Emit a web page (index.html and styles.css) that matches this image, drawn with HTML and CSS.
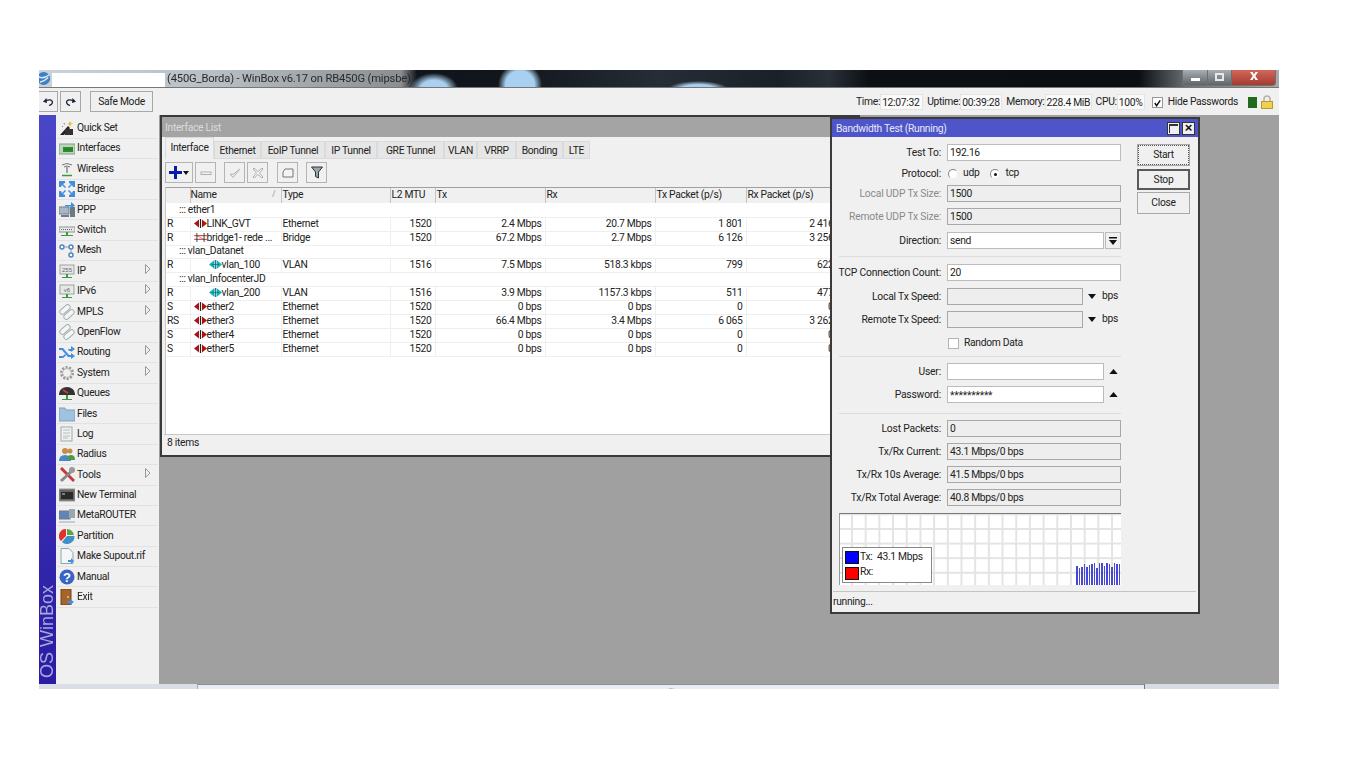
FILE: index.html
```html
<!DOCTYPE html>
<html lang="en">
<head>
<meta charset="utf-8">
<title>WinBox v6.17</title>
<link rel="stylesheet" href="styles.css">
</head>
<body>
<svg class="defs" width="0" height="0" aria-hidden="true">
  <defs>
    <symbol id="eth" viewBox="0 0 13 9"><path d="M0 4.500 5 .5v8z" fill="#a81414"/><path d="M13 4.500 8 .5v8z" fill="#a81414"/><path d="M6.500 0v9" stroke="#222" stroke-width="1.200"/></symbol>
    <symbol id="vlan" viewBox="0 0 13 9"><path d="M0 4.500 5.500 0v9z" fill="#10b0b8"/><path d="M13 4.500 7.500 0v9z" fill="#10b0b8"/><path d="M6.500 0v9" stroke="#244" stroke-width=".8"/><path d="M3 4.500h7" stroke="#0a5a60" stroke-width=".6"/></symbol>
    <symbol id="brg" viewBox="0 0 14 10"><path d="M0 3h14M0 7h14" stroke="#a02020"/><path d="M3 0v10M11 0v10" stroke="#333"/><path d="M3 3l8 4" stroke="#a02020" stroke-width=".5"/></symbol>
    <symbol id="arrow" viewBox="0 0 6 10"><path d="M.5.500 5 5 .5 9.500z" fill="#eee" stroke="#999"/></symbol>
    <symbol id="pill" viewBox="0 0 16 16"><g fill="#f4f6f6" stroke="#a3adad"><rect x="0" y="3" width="12" height="5" rx="2.500" transform="rotate(-42 6 5.500)"/><rect x="4" y="8" width="12" height="5" rx="2.500" transform="rotate(-42 10 10.500)"/></g></symbol>
    <symbol id="sortdn" viewBox="0 0 10 6"><path d="M0 0h10L5 6z" fill="#111"/></symbol>
    <symbol id="sortup" viewBox="0 0 10 6"><path d="M0 6h10L5 0z" fill="#111"/></symbol>
  </defs>
</svg>

<div class="app">
  <header class="titlebar">
    <svg class="globe" viewBox="0 0 14 16" width="13" height="15"><circle cx="5" cy="8" r="7" fill="#3f7fc4"/><path d="M-1 6q6 3 12-2M1 12q5-1 9-5" stroke="#dcebf7" stroke-width="1.500" fill="none"/></svg>
    <span class="mask"></span>
    <span class="title-text">(450G_Borda) - WinBox v6.17 on RB450G (mipsbe)</span>
    <span class="wincontrols">
      <span class="wc wc-min"><i></i></span>
      <span class="wc wc-max"><i></i></span>
      <span class="wc wc-close"><svg viewBox="0 0 10 8" width="10" height="8"><path d="M1 0h2.500L5 2.500 6.500 0H9L6.300 4 9 8H6.500L5 5.500 3.500 8H1l2.700-4z" fill="#fff"/></svg></span>
    </span>
  </header>

  <div class="toolbar">
    <button class="tbtn tbtn-undo"><svg viewBox="0 0 12 10" width="12" height="10"><path d="M4.500 1 1 4.800 5 6z" fill="#16223a"/><path d="M3.500 3.800q6-2.300 7 1.200 0 2.500-3.500 3.500" fill="none" stroke="#16223a" stroke-width="1.200"/></svg></button>
    <button class="tbtn tbtn-redo"><svg viewBox="0 0 12 10" width="12" height="10"><path d="M7.500 1 11 4.800 7 6z" fill="#16223a"/><path d="M8.500 3.800q-6-2.300-7 1.200 0 2.500 3.500 3.500" fill="none" stroke="#16223a" stroke-width="1.200"/></svg></button>
    <button class="tbtn safe">Safe Mode</button>
    <div class="stats">
      <span class="stat-l">Time:</span><span class="stat-v sv-time">12:07:32</span>
      <span class="stat-l">Uptime:</span><span class="stat-v sv-up">00:39:28</span>
      <span class="stat-l">Memory:</span><span class="stat-v sv-mem">228.4 MiB</span>
      <span class="stat-l">CPU:</span><span class="stat-v sv-cpu">100%</span>
      <label class="hide"><span class="chk"><svg viewBox="0 0 10 10" width="10" height="10"><path d="M2 5l2 3 4-6" fill="none" stroke="#111" stroke-width="1.600"/></svg></span>Hide Passwords</label>
      <span class="led"></span>
      <svg class="lock" viewBox="0 0 12 14" width="12" height="14"><path d="M3 7V4a3 3 0 0 1 6 0v3" fill="none" stroke="#b5b5a8" stroke-width="1.600"/><rect x=".5" y="6.500" width="11" height="7" fill="#f0d050" stroke="#b89a30"/></svg>
    </div>
  </div>

  <div class="main">
    <div class="brand"><span class="brand-text">OS WinBox</span></div>

    <nav class="menu">
      <a class="mi"><svg class="ic" viewBox="0 0 16 16"><path d="M1 15 9 6l2 2-6 7z" fill="#222"/><rect x="6" y="9" width="8" height="6" fill="#333"/><path d="M11 1l1 2 2 .5-2 1L11 7l-1-2.500L8 4l2-1z" fill="#e0c040"/><path d="M3 6l1 1M5 3l.5 1.500" stroke="#8a8a40"/></svg>Quick Set</a>
      <a class="mi"><svg class="ic" viewBox="0 0 16 16"><rect x="0" y="3" width="16" height="10" fill="#bcd4bc" stroke="#7ea17e"/><rect x="4" y="6" width="10" height="5" fill="#2f8a2f"/><path d="M5 8.500h8" stroke="#173" stroke-dasharray="1 1"/></svg>Interfaces</a>
      <a class="mi"><svg class="ic" viewBox="0 0 16 16"><path d="M3 4q5-3 10 0M5 6q3-2 6 0" fill="none" stroke="#777"/><path d="M8 6v6" stroke="#888" stroke-width="1.500"/><path d="M3 14.500h10" stroke="#3c9a3c" stroke-width="1.500"/></svg>Wireless</a>
      <a class="mi"><svg class="ic" viewBox="0 0 16 16"><g fill="#3f8fdc"><path d="M0 0h6v2l-2 1 3 3-1 1-3-3-1 2H0zM16 0h-6v2l2 1-3 3 1 1 3-3 1 2h2zM0 16h6v-2l-2-1 3-3-1-1-3 3-1-2H0zM16 16h-6v-2l2-1-3-3 1-1 3 3 1-2h2z"/></g></svg>Bridge</a>
      <a class="mi"><svg class="ic" viewBox="0 0 16 16"><rect x="0" y="5" width="10" height="7" fill="#a6b8c6" stroke="#6f7f8b"/><rect x="11" y="5" width="5" height="10" fill="#6c7a86"/><path d="M6 3h6V0l4 3.500-4 3V4.500H6z" fill="#3f8fdc"/><path d="M2 14h8" stroke="#778" stroke-width="2"/></svg>PPP</a>
      <a class="mi"><svg class="ic" viewBox="0 0 16 16"><rect x="0" y="5" width="16" height="5" fill="#e6e8e8" stroke="#8c9494"/><path d="M2 7.500h12" stroke="#667" stroke-dasharray="1 1"/><path d="M8 10v3" stroke="#3c9a3c" stroke-width="2"/><path d="M2 13.500h12" stroke="#3c9a3c"/></svg>Switch</a>
      <a class="mi"><svg class="ic" viewBox="0 0 16 16"><g fill="#fff" stroke="#4a86c8" stroke-width="1.500"><circle cx="3" cy="4" r="2"/><circle cx="12" cy="4" r="2"/><circle cx="12" cy="12" r="2"/></g><path d="M5 4h5M12 6v4" stroke="#999"/></svg>Mesh</a>
      <a class="mi mi-arrow"><svg class="ic" viewBox="0 0 16 16"><rect x="1" y="2" width="14" height="9" fill="#e6e8e8" stroke="#9aa2a2"/><text x="8" y="9" class="chiptxt">255</text><path d="M8 11v3" stroke="#3c9a3c" stroke-width="2"/><path d="M3 14.500h10" stroke="#3c9a3c"/></svg>IP<svg class="sub"><use href="#arrow"/></svg></a>
      <a class="mi mi-arrow"><svg class="ic" viewBox="0 0 16 16"><rect x="1" y="2" width="14" height="9" fill="#e6e8e8" stroke="#9aa2a2"/><text x="8" y="9" class="chiptxt">v6</text><path d="M8 11v3" stroke="#3c9a3c" stroke-width="2"/><path d="M3 14.500h10" stroke="#3c9a3c"/></svg>IPv6<svg class="sub"><use href="#arrow"/></svg></a>
      <a class="mi mi-arrow"><svg class="ic"><use href="#pill"/></svg>MPLS<svg class="sub"><use href="#arrow"/></svg></a>
      <a class="mi"><svg class="ic"><use href="#pill"/></svg>OpenFlow</a>
      <a class="mi mi-arrow"><svg class="ic" viewBox="0 0 16 16"><path d="M0 4h4l6 7h2V9l4 3-4 3v-2H9L3 6H0zM0 12h4l2-2 1 1.500L4 14H0zM9 5h3V2l4 3-4 3V7h-2z" fill="#3f8fdc"/></svg>Routing<svg class="sub"><use href="#arrow"/></svg></a>
      <a class="mi mi-arrow"><svg class="ic" viewBox="0 0 16 16"><circle cx="8" cy="8" r="5.500" fill="none" stroke="#999" stroke-width="3" stroke-dasharray="2 1.400"/><circle cx="8" cy="8" r="4.500" fill="none" stroke="#bbb"/></svg>System<svg class="sub"><use href="#arrow"/></svg></a>
      <a class="mi"><svg class="ic" viewBox="0 0 16 16"><path d="M0 9a8 7 0 0 1 16 0v1H0z" fill="#333"/><path d="M4 5l5 3" stroke="#d04040" stroke-width="1.500"/><path d="M8 10v4" stroke="#3c9a3c" stroke-width="2"/><path d="M3 14.500h10" stroke="#3c9a3c"/></svg>Queues</a>
      <a class="mi"><svg class="ic" viewBox="0 0 16 16"><path d="M0 2h6l1 2h9v11H0z" fill="#9fc2e0" stroke="#7ea0bd"/></svg>Files</a>
      <a class="mi"><svg class="ic" viewBox="0 0 16 16"><rect x="2" y="1" width="11" height="14" fill="#eef2f2" stroke="#a0a8a8"/><path d="M4 4h7M4 7h7M4 10h7M4 12h5" stroke="#b8c0c0"/></svg>Log</a>
      <a class="mi"><svg class="ic" viewBox="0 0 16 16"><circle cx="6" cy="5" r="3" fill="#c98a4a"/><path d="M0 15q0-6 6-6t6 6z" fill="#4a86c8"/><circle cx="11" cy="5" r="2.500" fill="#c98a4a"/><path d="M8 14q0-5 4-5t4 5z" fill="#4a9a4a"/></svg>Radius</a>
      <a class="mi mi-arrow"><svg class="ic" viewBox="0 0 16 16"><path d="M2 1l13 13" stroke="#c83a3a" stroke-width="3"/><path d="M14 3 2 14" stroke="#888" stroke-width="3"/><circle cx="13" cy="3" r="3" fill="#9a9a9a"/></svg>Tools<svg class="sub"><use href="#arrow"/></svg></a>
      <a class="mi"><svg class="ic" viewBox="0 0 16 16"><rect x="0" y="2" width="16" height="12" fill="#666" stroke="#999"/><rect x="2" y="5" width="12" height="7" fill="#2a2a2a"/><path d="M3 7h3" stroke="#ccc"/></svg>New Terminal</a>
      <a class="mi"><svg class="ic" viewBox="0 0 16 16"><rect x="0" y="3" width="11" height="8" fill="#5f86b8" stroke="#778"/><rect x="10" y="1" width="6" height="9" fill="#9aa6b0"/><path d="M0 13h16v2H0z" fill="#c5ccd4"/></svg>MetaROUTER</a>
      <a class="mi"><svg class="ic" viewBox="0 0 16 16"><path d="M7 8V1a7 7 0 0 0-5 12z" fill="#e03030"/><path d="M8 1v6h7a7 7 0 0 0-7-6z" fill="#58a840"/><path d="M8 8h7.500A7.500 7.500 0 0 1 3 14z" fill="#3f8fc8"/></svg>Partition</a>
      <a class="mi"><svg class="ic" viewBox="0 0 16 16"><path d="M2 .5h8l4 4V15.500H2z" fill="#f4f6f8" stroke="#8aa"/><path d="M9 12h3v-2l3 3-3 3v-2H9z" fill="#3f8fdc"/></svg>Make Supout.rif</a>
      <a class="mi"><svg class="ic" viewBox="0 0 16 16"><circle cx="8" cy="8" r="7.500" fill="#3a64c4"/><text x="8" y="12.500" class="qmark">?</text></svg>Manual</a>
      <a class="mi"><svg class="ic" viewBox="0 0 16 16"><rect x="2" y="0" width="10" height="16" fill="#a8622a" stroke="#74401a"/><circle cx="9" cy="8" r="1" fill="#e8d060"/><path d="M8 12h3v-2l4 3-4 3v-2H8z" fill="#3f8fdc"/></svg>Exit</a>
    </nav>

    <div class="desktop">
      <section class="win win-list">
        <div class="list-title">Interface List</div>
        <div class="tabs">
          <span class="tab active tw1">Interface</span>
          <span class="tab tw2">Ethernet</span>
          <span class="tab tw3">EoIP Tunnel</span>
          <span class="tab tw4">IP Tunnel</span>
          <span class="tab tw5">GRE Tunnel</span>
          <span class="tab tw6">VLAN</span>
          <span class="tab tw7">VRRP</span>
          <span class="tab tw8">Bonding</span>
          <span class="tab tw9">LTE</span>
        </div>
        <div class="actions">
          <span class="act act-add"><svg viewBox="0 0 13 13" width="13" height="13"><path d="M5 0h3v5h5v3H8v5H5V8H0V5h5z" fill="#0a1aa8"/></svg><svg viewBox="0 0 6 4" width="6" height="4"><path d="M0 0h6L3 4z" fill="#111"/></svg></span>
          <span class="act"><svg viewBox="0 0 12 12" width="12" height="12"><rect x="1" y="5" width="10" height="2.500" fill="#f4f4f4" stroke="#b0b0b0"/></svg></span>
          <span class="act act-g1"><svg viewBox="0 0 12 12" width="12" height="12"><path d="M1 7l3 3.500L11 2l-7 5.500z" fill="#f4f4f4" stroke="#b0b0b0"/></svg></span>
          <span class="act"><svg viewBox="0 0 12 12" width="12" height="12"><path d="M2 1l4 3.500L10 1l1 1-3.500 4L11 10l-1 1-4-3.500L2 11l-1-1 3.500-4L1 2z" fill="#f4f4f4" stroke="#b0b0b0"/></svg></span>
          <span class="act act-g2"><svg viewBox="0 0 12 12" width="12" height="12"><path d="M1 5l2-3h8v8H1z" fill="#f4f4f4" stroke="#777"/></svg></span>
          <span class="act act-g3"><svg viewBox="0 0 12 13" width="12" height="13"><path d="M.5 1h11L7.500 6v6L4.500 10.500V6z" fill="#98a6ae" stroke="#333"/></svg></span>
        </div>
        <div class="tablewrap">
          <table class="grid">
            <colgroup><col class="c1"><col class="c2"><col class="c3"><col class="c4"><col class="c5"><col class="c6"><col class="c7"><col class="c8"></colgroup>
            <thead><tr><th></th><th>Name<span class="sortmark">/</span></th><th>Type</th><th>L2 MTU</th><th>Tx</th><th>Rx</th><th>Tx Packet (p/s)</th><th>Rx Packet (p/s)</th></tr></thead>
            <tbody>
              <tr class="cmt"><td colspan="8">::: ether1</td></tr>
              <tr><td>R</td><td><svg class="rowic"><use href="#eth"/></svg>LINK_GVT</td><td>Ethernet</td><td class="n">1520</td><td class="n">2.4 Mbps</td><td class="n">20.7 Mbps</td><td class="n">1 801</td><td class="n">2 416</td></tr>
              <tr><td>R</td><td><svg class="rowic"><use href="#brg"/></svg>bridge1- rede ...</td><td>Bridge</td><td class="n">1520</td><td class="n">67.2 Mbps</td><td class="n">2.7 Mbps</td><td class="n">6 126</td><td class="n">3 256</td></tr>
              <tr class="cmt short"><td colspan="8">::: vlan_Datanet</td></tr>
              <tr><td>R</td><td class="ind"><svg class="rowic"><use href="#vlan"/></svg>vlan_100</td><td>VLAN</td><td class="n">1516</td><td class="n">7.5 Mbps</td><td class="n">518.3 kbps</td><td class="n">799</td><td class="n">622</td></tr>
              <tr class="cmt"><td colspan="8">::: vlan_InfocenterJD</td></tr>
              <tr><td>R</td><td class="ind"><svg class="rowic"><use href="#vlan"/></svg>vlan_200</td><td>VLAN</td><td class="n">1516</td><td class="n">3.9 Mbps</td><td class="n">1157.3 kbps</td><td class="n">511</td><td class="n">477</td></tr>
              <tr><td>S</td><td><svg class="rowic"><use href="#eth"/></svg>ether2</td><td>Ethernet</td><td class="n">1520</td><td class="n">0 bps</td><td class="n">0 bps</td><td class="n">0</td><td class="n">0</td></tr>
              <tr><td>RS</td><td><svg class="rowic"><use href="#eth"/></svg>ether3</td><td>Ethernet</td><td class="n">1520</td><td class="n">66.4 Mbps</td><td class="n">3.4 Mbps</td><td class="n">6 065</td><td class="n">3 262</td></tr>
              <tr><td>S</td><td><svg class="rowic"><use href="#eth"/></svg>ether4</td><td>Ethernet</td><td class="n">1520</td><td class="n">0 bps</td><td class="n">0 bps</td><td class="n">0</td><td class="n">0</td></tr>
              <tr><td>S</td><td><svg class="rowic"><use href="#eth"/></svg>ether5</td><td>Ethernet</td><td class="n">1520</td><td class="n">0 bps</td><td class="n">0 bps</td><td class="n">0</td><td class="n">0</td></tr>
            </tbody>
          </table>
        </div>
        <div class="list-status">8 items</div>
      </section>

      <section class="win win-bw">
        <div class="bw-title"><span>Bandwidth Test (Running)</span><span class="bw-ctl"><i class="bc bc-max"></i><i class="bc bc-close">×</i></span></div>
        <div class="bw-body">
          <div class="form">
            <label class="lb">Test To:</label><div class="fld"><span class="inp">192.16</span></div>
            <label class="lb">Protocol:</label><div class="fld radios"><span class="radio"></span><span class="rlabel r1">udp</span><span class="radio on"></span><span class="rlabel">tcp</span></div>
            <label class="lb dim">Local UDP Tx Size:</label><div class="fld"><span class="inp ro">1500</span></div>
            <label class="lb dim">Remote UDP Tx Size:</label><div class="fld"><span class="inp ro">1500</span></div>
            <label class="lb">Direction:</label><div class="fld"><span class="inp w-dir">send</span><span class="dd"><svg viewBox="0 0 8 8" width="8" height="8"><path d="M0 0h8v1.500H0zM0 3h8L4 8z" fill="#111"/></svg></span></div>
            <div class="sep"></div>
            <label class="lb">TCP Connection Count:</label><div class="fld"><span class="inp">20</span></div>
            <label class="lb">Local Tx Speed:</label><div class="fld"><span class="inp ro w-spd"></span><svg class="tri"><use href="#sortdn"/></svg><span class="unit">bps</span></div>
            <label class="lb">Remote Tx Speed:</label><div class="fld"><span class="inp ro w-spd"></span><svg class="tri"><use href="#sortdn"/></svg><span class="unit">bps</span></div>
            <span></span><div class="fld"><span class="box"></span><span class="rand">Random Data</span></div>
            <div class="sep"></div>
            <label class="lb">User:</label><div class="fld"><span class="inp w-usr"></span><svg class="tri tri-up"><use href="#sortup"/></svg></div>
            <label class="lb">Password:</label><div class="fld"><span class="inp w-usr pw">**********</span><svg class="tri tri-up"><use href="#sortup"/></svg></div>
            <div class="sep"></div>
            <label class="lb">Lost Packets:</label><div class="fld"><span class="inp ro">0</span></div>
            <label class="lb">Tx/Rx Current:</label><div class="fld"><span class="inp ro">43.1 Mbps/0 bps</span></div>
            <label class="lb">Tx/Rx 10s Average:</label><div class="fld"><span class="inp ro">41.5 Mbps/0 bps</span></div>
            <label class="lb">Tx/Rx Total Average:</label><div class="fld"><span class="inp ro">40.8 Mbps/0 bps</span></div>
          </div>
          <div class="btns">
            <button class="btn b-start">Start</button>
            <button class="btn b-stop">Stop</button>
            <button class="btn b-close">Close</button>
          </div>
        </div>
        <div class="graph">
          <div class="legend">
            <div class="lg-row"><span class="sw sw-tx"></span><span>Tx:&nbsp; 43.1 Mbps</span></div>
            <div class="lg-row"><span class="sw sw-rx"></span><span>Rx:</span></div>
          </div>
          <div class="bars">
            <i style="height:19px"></i><i style="height:17px"></i><i style="height:18px"></i><i style="height:21px"></i><i style="height:18px"></i><i style="height:20px"></i><i style="height:21px"></i><i style="height:22px"></i><i style="height:17px"></i><i style="height:22px"></i><i style="height:22px"></i><i style="height:19px"></i><i style="height:22px"></i><i style="height:21px"></i><i style="height:18px"></i><i style="height:22px"></i><i style="height:21px"></i><i style="height:21px"></i>
          </div>
        </div>
        <div class="bw-status">running...</div>
      </section>
    </div>
  </div>

  <footer class="bottom">
    <span class="bot-l"></span>
    <span class="bot-m">....</span>
    <span class="bot-r"></span>
  </footer>
</div>
</body>
</html>
```

FILE: styles.css
```css
* { box-sizing: border-box; }
html, body { margin: 0; height: 100%; background: #fff; }
body {
  padding: 70px 0 0 39px;
  font: 10.3px/1 Roboto, "Liberation Sans", Arial, sans-serif;
  letter-spacing: -.3px;
  color: #222;
  overflow: hidden;
}
.defs { position: absolute; }
.app { width: 1240px; height: 619px; display: flex; flex-direction: column; filter: blur(.35px); }

/* Title bar */
.titlebar {
  height: 18px; flex: none; display: flex; align-items: center; position: relative; overflow: hidden;
  border-bottom: 1px solid #777;
  background:
    radial-gradient(ellipse 24px 16px at 395px 19px, #a9d0f0 0 55%, transparent 100%),
    radial-gradient(ellipse 22px 22px at 481px 15px, #a9d0f0 0 65%, transparent 100%),
    radial-gradient(ellipse 30px 8px at 659px 19px, #a9d0f0 0 55%, transparent 100%),
    linear-gradient(90deg, #c9d3da 0, #b7bfc4 180px, #8a8e90 362px, #10151b 378px, #11161c 470px, #262d36 620px, #1a2028 740px, #2a3038 790px, #0c1015 830px, #0b0f14 1100px, #6f7478 1150px, #a7abad 1240px);
}
.globe { flex: none; }
.mask { width: 113px; height: 14px; background: #fff; flex: none; margin-top: 3px; }
.title-text { margin-left: 2px; font-size: 11.2px; letter-spacing: -.15px; color: #2a2a2a; white-space: nowrap; }
.wincontrols { margin-left: auto; margin-right: 3px; display: flex; align-self: flex-start; height: 16px; }
.wc { display: block; height: 16px; border: 1px solid #6c7074; border-top: 0; position: relative; text-align: center; }
.wc-min { width: 26px; border-radius: 0 0 0 4px; background: linear-gradient(#a9aeb2, #5f6468); }
.wc-min i { position: absolute; left: 8px; top: 8px; width: 9px; height: 3px; background: #fff; }
.wc-max { width: 24px; background: linear-gradient(#a9aeb2, #5f6468); border-left: 0; }
.wc-max i { position: absolute; left: 7px; top: 3px; width: 9px; height: 8px; border: 2px solid #e8e8e8; }
.wc-close { width: 44px; border-radius: 0 0 4px 0; border-left: 0; background: linear-gradient(#d0685c, #a83a2e); padding-top: 2px; }

/* Toolbar */
.toolbar { height: 27px; flex: none; background: #f0f0f0; display: flex; align-items: center; }
.tbtn { height: 21px; padding: 0; border: 1px solid #a8a8a8; background: #f0f0f0; font: inherit; letter-spacing: inherit; color: #222; display: flex; align-items: center; justify-content: center; }
.tbtn-undo { width: 19px; border-left: 0; }
.tbtn-redo { width: 21px; margin-left: 2px; }
.safe { width: 63px; margin-left: 9px; padding-top: 1px; }
.stats { margin-left: auto; display: flex; align-items: center; padding-right: 6px; padding-top: 1px; }
.stat-l { margin-left: 4px; }
.stat-v { height: 16px; line-height: 15px; background: #fafafa; border: 1px solid #e4e4e4; padding-left: 1px; white-space: nowrap; }
.sv-time { width: 43px; }
.sv-up { width: 42px; }
.sv-mem { width: 47px; }
.sv-cpu { width: 28px; }
.hide { display: flex; align-items: center; margin-left: 7px; white-space: nowrap; }
.chk { width: 11px; height: 11px; background: #fff; border: 1px solid #999; margin-right: 5px; display: flex; }
.led { width: 9px; height: 11px; background: #1f6a1f; margin-left: 10px; }
.lock { margin-left: 4px; }

/* Main */
.main { flex: 1; display: flex; min-height: 0; }
.brand { width: 17px; flex: none; background: linear-gradient(#4a46c8, #2a1ca4); padding-top: 470px; }
.brand-text { display: block; writing-mode: vertical-rl; transform: rotate(180deg); font: 18px/17px "Liberation Sans", Arial, sans-serif; letter-spacing: 0; color: #a9a9d8; white-space: nowrap; }
.menu { width: 103px; flex: none; background: #f0f0f0; padding: 3.500px 1px 0 1px; }
.mi { display: flex; align-items: center; height: 20.4px; border-bottom: 1px solid #e2e2e2; white-space: nowrap; }
.ic { width: 16px; height: 16px; flex: none; margin: 0 2px 0 2px; }
.sub { width: 6px; height: 10px; margin-left: auto; margin-right: 7px; margin-bottom: 4px; }
.qmark { font: bold 13px "Liberation Sans", sans-serif; letter-spacing: 0; fill: #fff; text-anchor: middle; }
.chiptxt { font: 6px "Liberation Sans", sans-serif; letter-spacing: 0; fill: #666; text-anchor: middle; }

.desktop { flex: 1; background: #a0a0a0; position: relative; overflow: hidden; }
.win { position: absolute; background: #f0f0f0; }

/* Interface list */
.win-list { left: 1px; top: 0; width: 700px; height: 342px; border: 2px solid #3a3a3a; border-right: 0; display: flex; flex-direction: column; }
.list-title { height: 20px; flex: none; background: #a4a4a4; color: #dcdcdc; padding: 6px 0 0 3px; }
.tabs { height: 22px; flex: none; display: flex; align-items: flex-end; padding-left: 3px; }
.tab { height: 18px; line-height: 18px; background: #e6e6e6; border: 1px solid #dadada; text-align: center; white-space: nowrap; }
.tab.active { height: 22px; line-height: 20px; background: #f0f0f0; border-bottom: 0; }
.tw1 { width: 49px; } .tw2 { width: 47px; } .tw3 { width: 64px; } .tw4 { width: 52px; } .tw5 { width: 67px; } .tw6 { width: 33px; } .tw7 { width: 39px; } .tw8 { width: 47px; } .tw9 { width: 27px; }
.actions { height: 27px; margin-bottom: 1px; flex: none; display: flex; align-items: center; padding-left: 3px; gap: 2px; }
.act { width: 21px; height: 21px; border: 1px solid #b4b4b4; display: flex; align-items: center; justify-content: center; }
.act-add { width: 28px; gap: 1px; }
.act-g1 { margin-left: 6px; }
.act-g2 { margin-left: 7px; }
.act-g3 { margin-left: 6px; }
.tablewrap { height: 247px; flex: none; margin: 0 0 0 3px; background: #fff; border-top: 1px solid #a0a0a0; border-left: 1px solid #c8c8c8; overflow: hidden; }
.grid { border-collapse: collapse; table-layout: fixed; width: 671px; }
.c1 { width: 24px; } .c2 { width: 91px; } .c3 { width: 109px; } .c4 { width: 45px; } .c5 { width: 110px; } .c6 { width: 110px; } .c7 { width: 91px; } .c8 { width: 91px; }
.grid th { height: 15px; padding: 0 0 0 1px; background: #f0f0f0; border-right: 1px solid #c4c4c4; text-align: left; font-weight: normal; position: relative; }
.grid th:nth-child(2) { padding-left: 0; }
.grid td { height: 14px; padding: 0 3px 0 1px; border-right: 1px solid #efefef; border-bottom: 1px solid #efefef; white-space: nowrap; overflow: hidden; }
.grid .n { text-align: right; }
.grid .cmt td { border-right: 0; padding-left: 13px; }
.grid .short td { height: 13px; }
.sortmark { position: absolute; right: 5px; top: 2px; color: #999; font-size: 9px; }
.rowic { width: 13px; height: 9px; margin-left: 2px; vertical-align: -1px; }
.grid .ind { padding-left: 16px; }
.list-status { flex: 1; border-top: 1px solid #c8c8c8; padding: 3px 0 0 3px; margin-left: 2px; }

/* Bandwidth test */
.win-bw { left: 671px; top: 2px; width: 370px; height: 497px; border: 2px solid #3a3a3a; display: flex; flex-direction: column; padding: 0 0 2px; z-index: 2; }
.bw-title { height: 18px; flex: none; background: #4d55c9; color: #e8e8f8; display: flex; align-items: center; justify-content: space-between; padding: 0 3px 0 4px; }
.bw-title > span:first-child { padding-top: 2px; }
.bw-ctl { display: flex; gap: 2px; }
.bc { display: block; width: 13px; height: 13px; background: #f0f0f0; border: 1px solid #333; }
.bc-max { box-shadow: inset 0 0 0 1px #f0f0f0, inset 2px 3px 0 0 #333, inset -2px -2px 0 0 #f0f0f0; }
.bc-close { font: bold 13px/10px "Liberation Sans", sans-serif; letter-spacing: 0; text-align: center; font-style: normal; color: #111; }
.bw-body { display: flex; flex: none; padding: 7px 0 0 7px; }
.form { width: 282px; display: grid; grid-template-columns: 102px 1fr; column-gap: 6px; grid-template-rows: 21px 20px 23px 24px 24px 8px 24px 23px 24px 21px 7px 23px 27px 7px 23px 23px 23px 24px; }
.lb { justify-self: end; height: 17px; line-height: 17px; white-space: nowrap; letter-spacing: -.18px; }
.dim { color: #8a8a8a; }
.fld { display: flex; align-items: center; height: 17px; }
.inp { display: block; width: 174px; height: 17px; line-height: 15px; background: #fff; border: 1px solid #bcbcbc; padding-left: 2px; white-space: nowrap; }
.ro { background: #eeeeee; border-color: #a8a8a8; }
.w-dir { width: 157px; }
.dd { width: 16px; height: 17px; margin-left: 1px; background: #f0f0f0; border: 1px solid #bcbcbc; display: flex; align-items: center; justify-content: center; }
.w-spd { width: 136px; }
.w-usr { width: 157px; }
.pw { line-height: 17px; letter-spacing: -.2px; }
.tri { width: 8px; height: 5px; margin-left: 5px; }
.tri-up { width: 9px; }
.unit { margin-left: 6px; }
.sep { grid-column: 1 / -1; height: 1px; background: #dcdcdc; }
.radio { width: 10px; height: 10px; margin-left: 1px; border-radius: 50%; background: #fff; border: 1px solid #888; border-right-color: #eee; border-bottom-color: #eee; position: relative; }
.radio.on { margin-left: 0; }
.radio.on::after { content: ""; position: absolute; left: 3px; top: 3px; width: 3px; height: 3px; border-radius: 50%; background: #111; }
.rlabel { margin-left: 5px; }
.r1 { margin-right: 11px; }
.box { width: 11px; height: 11px; background: #fff; border: 1px solid #b4b4b4; margin-left: 1px; }
.rand { margin-left: 5px; }
.btns { display: flex; flex-direction: column; margin-left: 16px; }
.btn { width: 53px; height: 21px; border: 1px solid #a8a8a8; background: #f0f0f0; font: inherit; letter-spacing: inherit; color: #222; padding: 1px 0 0; }
.b-start { height: 22px; outline: 1px dotted #555; outline-offset: -2px; }
.b-stop { border: 2px solid #5a5a5a; margin-top: 3px; }
.b-close { height: 22px; margin-top: 2px; }
.graph { width: 282px; height: 72px; flex: none; margin: 0 0 0 7px; position: relative; border-top: 1px solid #777; border-left: 1px solid #999;
  background-color: #fff;
  background-image: linear-gradient(#e4e4e4 1.500px, transparent 1.500px), linear-gradient(90deg, #e4e4e4 1.500px, transparent 1.500px);
  background-size: 13.7px 14.6px; background-position: 11px 14px; }
.legend { position: absolute; left: 2px; top: 33px; width: 90px; height: 36px; background: #fff; border: 1px solid #888; padding: 2px 0 0 2px; }
.lg-row { display: flex; align-items: center; height: 15px; }
.sw { width: 14px; height: 13px; border: 1px solid #111; margin-right: 1px; }
.sw-tx { background: #0000ff; }
.sw-rx { background: #ff0000; margin-top: 1px; }
.bars { position: absolute; right: 1px; bottom: 0; display: flex; align-items: flex-end; gap: 1px; }
.bars i { display: block; width: 1.500px; background: #4848d8; }
.bw-status { flex: none; height: 19px; margin: 6px 2px 0 1px; background: #f0f0f0; border-top: 1px solid #c4c4c4; padding-top: 5px; }

/* Bottom */
.bottom { height: 5px; flex: none; display: flex; }
.bot-l { width: 158px; background: #dbdfe5; }
.bot-m { flex: 1; background: #e9edf3; border-top: 1px solid #8a8f98; text-align: center; font-size: 6px; line-height: 4px; color: #555; border-left: 1px solid #aaa; border-right: 1px solid #777; }
.bot-r { width: 134px; background: #d8dce2; }
```
